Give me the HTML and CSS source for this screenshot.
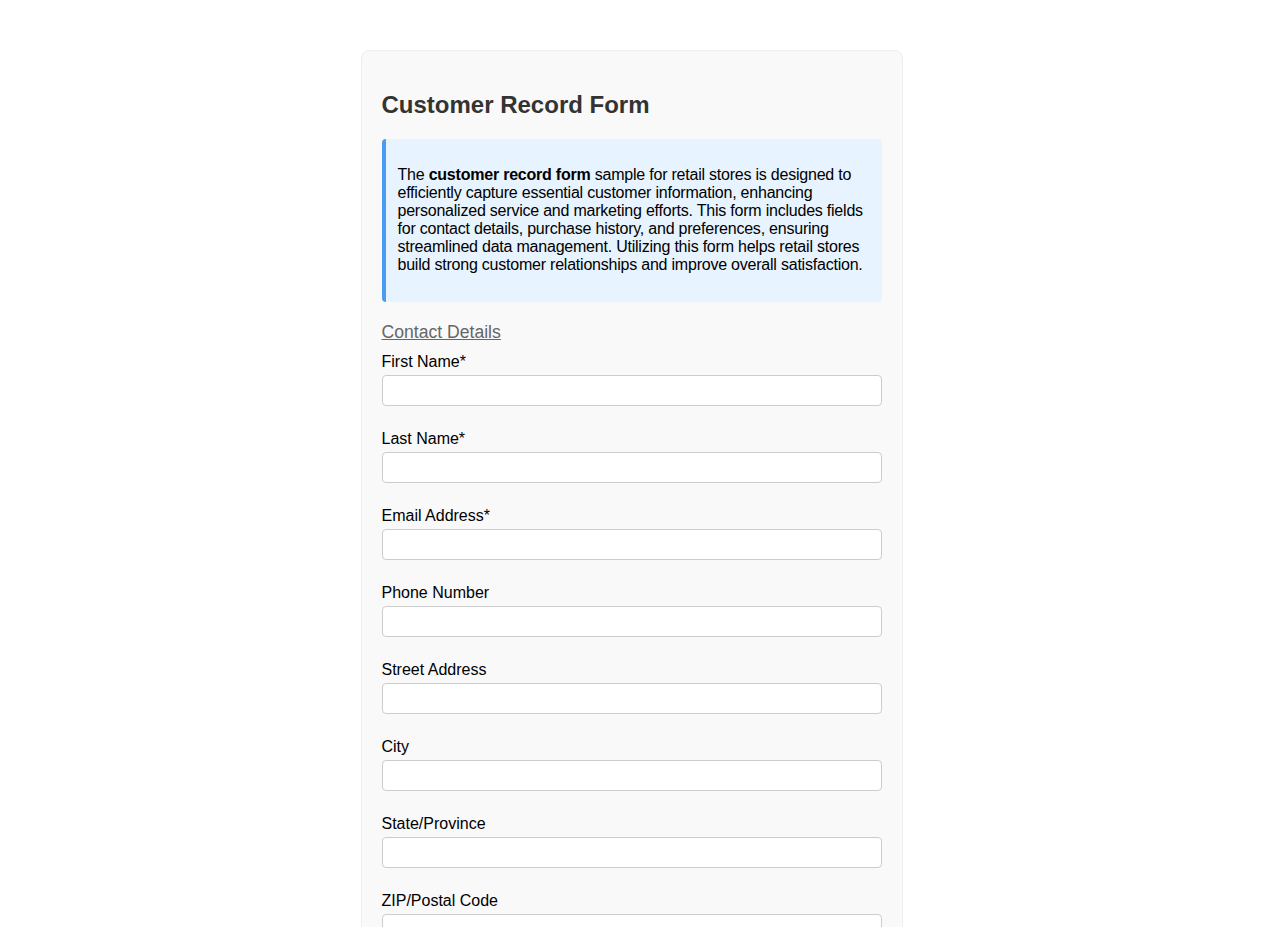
FILE: index.html
```html
<!DOCTYPE html>
<html lang="en">
<head>
<meta charset="utf-8">
<title>Customer Record Form</title>
<link rel="stylesheet" href="styles.css">
</head>
<body>
<div class="container">
  <h2 class="title">Customer Record Form</h2>
  <div class="info">
    <p>The <strong>customer record form</strong> sample for retail stores is designed to efficiently capture essential customer information, enhancing personalized service and marketing efforts. This form includes fields for contact details, purchase history, and preferences, ensuring streamlined data management. Utilizing this form helps retail stores build strong customer relationships and improve overall satisfaction.</p>
  </div>
  <form class="form">
    <div class="section-title">Contact Details</div>
    <div class="field"><label class="label" for="fn">First Name*</label><input class="input" id="fn" type="text"></div>
    <div class="field"><label class="label" for="ln">Last Name*</label><input class="input" id="ln" type="text"></div>
    <div class="field"><label class="label" for="em">Email Address*</label><input class="input" id="em" type="email"></div>
    <div class="field"><label class="label" for="ph">Phone Number</label><input class="input" id="ph" type="tel"></div>
    <div class="field"><label class="label" for="st">Street Address</label><input class="input" id="st" type="text"></div>
    <div class="field"><label class="label" for="ci">City</label><input class="input" id="ci" type="text"></div>
    <div class="field"><label class="label" for="sp">State/Province</label><input class="input" id="sp" type="text"></div>
    <div class="field"><label class="label" for="zp">ZIP/Postal Code</label><input class="input" id="zp" type="text"></div>
  </form>
</div>
</body>
</html>
```

FILE: styles.css
```css
html, body {
  margin: 0;
  padding: 0;
  background: #ffffff;
  font-family: "Liberation Sans", Arial, sans-serif;
  color: #000;
}
.container {
  width: 500px;
  margin: 50px auto;
  padding: 20px;
  background: #f9f9f9;
  border: 1px solid #eeeeee;
  border-radius: 8px;
}
.title {
  font-size: 24px;
  font-weight: bold;
  color: #333333;
  margin: 20px 0 20px;
  line-height: 28px;
}
.info {
  background: #e7f3fe;
  border-left: 4px solid #4a9cf0;
  border-radius: 4px;
  padding: 10px 12px;
}
.info p {
  margin: 17px 0 18px;
  font-size: 16px;
  line-height: 18px;
  letter-spacing: -0.22px;
}
.form {
  margin-top: 20px;
}
.section-title {
  font-size: 17.6px;
  line-height: 20px;
  color: #666666;
  text-decoration: underline;
  margin-bottom: 11px;
}
.field {
  margin-bottom: 24px;
}
.label {
  display: block;
  font-size: 16px;
  line-height: 18px;
  margin-bottom: 4px;
}
.input {
  display: block;
  box-sizing: border-box;
  width: 100%;
  height: 31px;
  margin: 0;
  padding: 5px 8px;
  border: 1px solid #cccccc;
  border-radius: 4px;
  background: #ffffff;
  font-family: "Liberation Sans", Arial, sans-serif;
  font-size: 14px;
}
```
